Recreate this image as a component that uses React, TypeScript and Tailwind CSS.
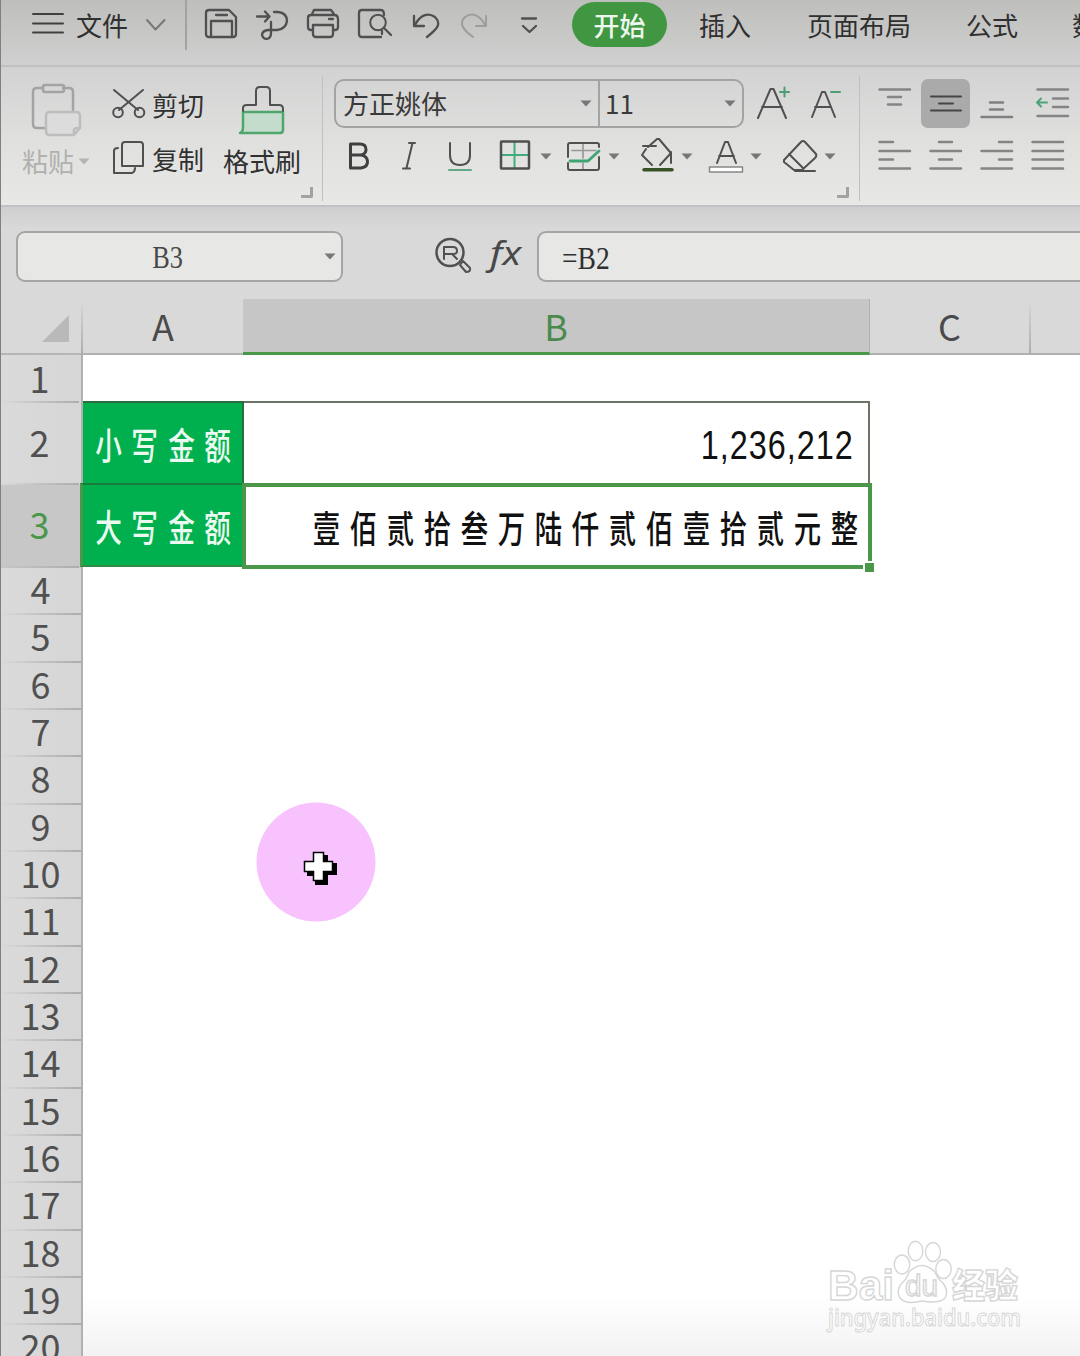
import React from "react";

type IconProps = {
  box: [number, number, number, number];
  children: React.ReactNode;
  className?: string;
};

/* Icon whose drawing area is given as x, y, width, height */
function Icon({ box, children, className = "" }: IconProps) {
  return (
    <svg
      className={"block shrink-0 " + className}
      width={box[2]}
      height={box[3]}
      viewBox={box.join(" ")}
      fill="none"
      stroke="#505050"
      strokeWidth={2}
      strokeLinecap="round"
      strokeLinejoin="round"
    >
      {children}
    </svg>
  );
}

function Caret({ className = "" }: { className?: string }) {
  return (
    <svg className={"block shrink-0 " + className} width="12" height="7" viewBox="0 0 12 7" fill="#777">
      <path d="M0.5 0.5H11.5L6 6.5Z" />
    </svg>
  );
}

function Corner({ className }: { className: string }) {
  return <span className={"absolute h-[11px] w-[12px] rounded-br-[2px] border-b-[3px] border-r-[3px] border-[#a2a2a2] " + className} />;
}

function TopBar() {
  return (
    <div className="flex h-[67px] shrink-0 items-start border-b-2 border-[#bfc0c3] bg-linear-to-b from-[#bebebc] to-[#d0d0d0] text-[26px] leading-[49px] text-[#303030]">
      <Icon box={[30, 10, 35, 28]} className="ml-[30px] mt-[10px]">
        <path d="M33 14H63M33 23.5H63M33 32.5H63" stroke="#404040" />
      </Icon>
      <span className="ml-[11px] w-[52px]">文件</span>
      <Icon box={[143, 14, 24, 22]} className="ml-[15px] mt-[14px]">
        <path d="M147 20L155.500 29.500L164.500 20" stroke="#777" />
      </Icon>
      <span className="ml-[18px] h-[50px] w-[2px] bg-[#a2a2a2]" />
      <Icon box={[203, 6, 36, 34]} className="ml-[16px] mt-[6px]">
        <path d="M209 10H229L236 17V34Q236 37 233 37H209Q206 37 206 34V13Q206 10 209 10ZM211 37V21H232V37M216 15H227" strokeWidth="2.300" />
      </Icon>
      <Icon box={[254, 6, 37, 36]} className="ml-[15px] mt-[6px]">
        <path d="M257 16.500H269M265 11.500L269.500 16.500L265 21.500M274 12H278Q287 13 287 21Q286 29 277 30H268Q262 31 262 35Q263 39 267 39Q271 38 271 33V22" strokeWidth="2.300" />
      </Icon>
      <Icon box={[305, 6, 36, 34]} className="ml-[14px] mt-[6px]">
        <path d="M313 30H311Q308 30 308 27V18Q308 15 311 15H334Q338 15 338 19V27Q338 30 335 30H333M312 14L314 10H331L334 14M329 19H333M313 25H333V34Q333 37 330 37H316Q313 37 313 34Z" strokeWidth="2.300" />
      </Icon>
      <Icon box={[356, 6, 37, 34]} className="ml-[15px] mt-[6px]">
        <path d="M381 37H362Q359 37 359 34V13Q359 10 362 10H381Q384 10 384 15M382 31V34M384 28L391 35" strokeWidth="2.300" />
        <circle cx="378" cy="22.500" r="7.800" />
      </Icon>
      <Icon box={[411, 10, 30, 31]} className="ml-[18px] mt-[10px]">
        <path d="M414 16V26H424M415 25C420 15 428 12 435 17C442 24 437 29 427 37" strokeWidth="2.300" />
      </Icon>
      <Icon box={[459, 10, 30, 31]} className="ml-[18px] mt-[10px]">
        <path d="M486 16V26H476M485 25C480 15 472 12 465 17C459 23 462 29 473 37" stroke="#9d9d9d" />
      </Icon>
      <Icon box={[519, 14, 20, 22]} className="ml-[30px] mt-[14px]">
        <path d="M522 18.500H536M523 26L529.500 32L536 26" strokeWidth="2.300" />
      </Icon>
      <span className="ml-[33px] mt-[2px] h-[45px] w-[95px] rounded-full bg-[#409641] text-center font-medium leading-[45px] text-[#eef7ee]">开始</span>
      <span className="ml-[32px] w-[52px]">插入</span>
      <span className="ml-[56px] w-[104px]">页面布局</span>
      <span className="ml-[55px] w-[52px]">公式</span>
      <span className="ml-[54px] w-[8px] overflow-hidden whitespace-nowrap">数据</span>
    </div>
  );
}

function ClipboardGroup() {
  return (
    <div className="relative flex w-[322px] shrink-0 text-[26px] leading-[30px] text-[#303030]">
      <div className="w-[92px] shrink-0 pl-[22px] pt-[15px]">
        <Icon box={[29, 82, 54, 56]} className="ml-[7px]">
          <g stroke="#a3a3a3" strokeWidth="2.500">
            <path d="M43 88H37Q33 88 33 92V124Q33 128 37 128H46M63 88H69Q73 88 73 92V110" />
            <rect x="43" y="85" width="21" height="7" rx="2" />
            <path d="M50 112H76Q80 112 80 116V128L74 135H50Q46 135 46 131V116Q46 112 50 112ZM74 134V130Q74 128 79 128" fill="#dcdcdc" stroke="#bdbdbd" />
          </g>
        </Icon>
        <div className="mt-[8px] flex items-center whitespace-nowrap text-[#b0b0ae]">
          粘贴
          <svg className="ml-[4px] block shrink-0" width="12" height="7" viewBox="0 0 12 7" fill="#b4b4b4">
            <path d="M0.500 0.500H11.500L6 6.500Z" />
          </svg>
        </div>
      </div>
      <div className="ml-[18px] w-[96px] shrink-0 pt-[21px]">
        <div className="flex items-start">
          <Icon box={[110, 88, 37, 32]}>
            <path d="M114 90L138 110M143 90L119 110" />
            <circle cx="118" cy="112.500" r="4.800" />
            <circle cx="139.500" cy="112.500" r="4.800" />
          </Icon>
          <span className="ml-[5px] mt-[2px] shrink-0 whitespace-nowrap">剪切</span>
        </div>
        <div className="mt-[19px] flex items-start">
          <Icon box={[110, 139, 37, 37]}>
            <path d="M125 142H140Q143 142 143 145V166H122V145Q122 142 125 142ZM118 148Q114 148 114 151V173H132Q135 172 135 168" />
          </Icon>
          <span className="ml-[5px] mt-[5px] shrink-0 whitespace-nowrap">复制</span>
        </div>
      </div>
      <div className="ml-[17px] w-[80px] shrink-0 pt-[16px]">
        <Icon box={[236, 83, 51, 54]} className="ml-[13px]">
          <path d="M243 112H283V130Q283 133 280 133H240Q243 132 243 127Z" fill="#c3dccb" stroke="#4fa66d" strokeWidth="2.500" />
          <path d="M243 111V108Q243 105 247 105H256V91Q256 87 260 87H266Q270 87 270 91V105H279Q283 105 283 109V111" />
        </Icon>
        <div className="mt-[9px] whitespace-nowrap">格式刷</div>
      </div>
      <Corner className="left-[301px] top-[120px]" />
    </div>
  );
}

function FontGroup() {
  return (
    <div className="relative w-[536px] shrink-0 pl-[11px] pt-[12px]">
      <div className="flex items-start">
        <div className="flex h-[49px] w-[410px] items-center rounded-[10px] border-2 border-[#a3a3a3] text-[26px] text-[#3a3a3a]">
          <span className="-mt-[2px] ml-[7px] w-[237px]">方正姚体</span>
          <Caret />
          <span className="ml-[6px] h-full w-[2px] bg-[#a3a3a3]" />
          <span className="-mt-[2px] ml-[5px] w-[119px]">11</span>
          <Caret />
        </div>
        <Icon box={[754, 84, 38, 40]} className="ml-[10px] mt-[5px]">
          <path d="M758 118L770.500 89H773.500L786 118M762 107H782" />
          <path d="M780 92H789M784.500 87.500V96.500" stroke="#4c9c75" />
        </Icon>
        <Icon box={[808, 84, 36, 40]} className="ml-[16px] mt-[5px]">
          <path d="M812 117L822 92H825L835 117M815 107H831" />
          <path d="M831 92H840" stroke="#4c9c75" />
        </Icon>
      </div>
      <div className="mt-[10px] flex h-[40px] items-start">
        <Icon box={[346, 138, 26, 36]} className="ml-[12px]">
          <path d="M350.500 144V168H361Q368 167 367.500 161Q367 156 361 155H351M361 155Q366 154 366 149.500Q366 144 360 144H350.500" strokeWidth="3" stroke="#404040" />
        </Icon>
        <Icon box={[398, 138, 22, 36]} className="ml-[26px]">
          <path d="M409 143H415M403 168.500H410M412.500 143L406.500 168" />
        </Icon>
        <Icon box={[446, 138, 28, 36]} className="ml-[26px]">
          <path d="M450 143V155Q450 165 460 165Q470 165 470 155V143" />
          <path d="M449 170H471" stroke="#62aa87" />
        </Icon>
        <Icon box={[498, 138, 33, 36]} className="ml-[24px]">
          <path d="M514.500 142V168M502 155H528" stroke="#3fae7c" />
          <rect x="501" y="141.500" width="28" height="27" rx="0.500" strokeWidth="2.500" />
        </Icon>
        <Caret className="ml-[9px] mt-[15px]" />
        <Icon box={[566, 138, 37, 36]} className="ml-[13px]">
          <path d="M573 150.500H597M584 143V158M584 163V170" stroke="#999" strokeWidth="1.700" />
          <path d="M600 147V145Q600 143 598 143H571Q569 143 569 145V157M569 163V168Q569 170 571 170H598Q600 170 600 168V157" />
          <path d="M571 161H589L600 151" stroke="#3fa575" strokeWidth="2.800" />
        </Icon>
        <Caret className="ml-[6px] mt-[15px]" />
        <Icon box={[639, 136, 36, 38]} className="ml-[19px] -mt-[2px]">
          <path d="M643 146H656M648 147L657 139H659L670 152M646 149L642 155L652 165M671 152V163M671 153L660 165" />
          <path d="M644 169.700H672" stroke="#375326" strokeWidth="3.500" />
        </Icon>
        <Caret className="ml-[6px] mt-[15px]" />
        <Icon box={[706, 138, 40, 38]} className="ml-[13px]">
          <path d="M717 163L725 142H728L736 163M719 156H734" />
          <rect x="709.500" y="167" width="33" height="5" fill="#fff" stroke="#888" strokeWidth="1.500" />
        </Icon>
        <Caret className="ml-[4px] mt-[15px]" />
        <Icon box={[780, 137, 40, 38]} className="ml-[18px] -mt-[1px]">
          <path d="M784 160L801 142Q803 140 805 142L816 154Q817 156 815 158L802 170H794L784 162ZM789 154L803 168M795 171H815" />
        </Icon>
        <Caret className="ml-[4px] mt-[15px]" />
      </div>
      <Corner className="left-[514px] top-[120px]" />
    </div>
  );
}

function ParagraphGroup() {
  return (
    <div className="pl-[17px] pt-[12px]">
      <div className="flex w-[220px] items-start">
        <Icon box={[877, 79, 36, 48]}>
          <path d="M879.500 89.500H910M888 97H901M888 104.500H901" stroke="#858585" strokeWidth="2.500" />
        </Icon>
        <span className="ml-[8px] flex h-[49px] w-[49px] items-center justify-center rounded-[7px] bg-[#aaa]">
          <Icon box={[928, 79, 36, 48]}>
            <path d="M931 95.500H961M939 102.500H953M931 109.500H961" stroke="#454545" />
          </Icon>
        </span>
        <Icon box={[979, 79, 36, 48]} className="ml-[9px]">
          <path d="M990 102.500H1003M990 109.500H1003M981.500 117H1012" stroke="#808080" strokeWidth="2.500" />
        </Icon>
        <Icon box={[1033, 79, 37, 48]} className="ml-[18px]">
          <path d="M1037.500 89.500H1068M1053 98.500H1068M1053 107H1068M1037.500 116H1068" stroke="#858585" strokeWidth="2.500" />
          <path d="M1037 102.500H1047M1041 98.500L1037 102.500L1041 106.500" stroke="#4ba377" />
        </Icon>
      </div>
      <div className="mt-[9px] flex w-[220px] gap-[15px]">
        <Icon box={[877, 137, 36, 36]}>
          <path d="M879.500 142H893M879.500 151H910M879.500 159.500H893M879.500 168.500H910" stroke="#858585" strokeWidth="2.500" />
        </Icon>
        <Icon box={[928, 137, 36, 36]}>
          <path d="M939 142H952M930.500 151H961M939 159.500H952M930.500 168.500H961" stroke="#858585" strokeWidth="2.500" />
        </Icon>
        <Icon box={[979, 137, 36, 36]}>
          <path d="M999 142H1012M981.500 151H1012M999 159.500H1012M981.500 168.500H1012" stroke="#858585" strokeWidth="2.500" />
        </Icon>
        <Icon box={[1030, 137, 36, 36]}>
          <path d="M1032.500 142H1063M1032.500 151H1063M1032.500 159.500H1063M1032.500 168.500H1063" stroke="#858585" strokeWidth="2.500" />
        </Icon>
      </div>
    </div>
  );
}

function FormulaBar() {
  return (
    <div className="flex h-[92px] shrink-0 items-start bg-linear-to-b from-[#cfcfcf] via-[#d9d9d9] via-25% to-[#d9d9d9] pt-[24px]">
      <div className="ml-[16px] flex h-[51px] w-[327px] items-center rounded-[9px] border-2 border-[#a5a5a5] bg-[#e7e7e5]">
        <span className="ml-[123px] w-[54px] text-center font-['Liberation_Serif',serif] text-[32px] text-[#484848]">
          <span className="inline-block scale-x-[0.82]">B3</span>
        </span>
        <Caret className="ml-[129px]" />
      </div>
      <Icon box={[432, 234, 42, 42]} className="ml-[89px] mt-[3px]">
        <circle cx="450" cy="252.500" r="13.500" strokeWidth="2.500" />
        <path d="M444 259V247H453Q457 247 457 251Q457 254 453 254H444M453 255L457 259" />
        <path d="M460 265L463 261L470 268Q471 272 466 272Z" />
      </Icon>
      <span className="ml-[16px] w-[34px] font-['Noto_Sans',sans-serif] text-[33px] italic leading-[44px] text-[#484848]">
        <span className="inline-block origin-left scale-x-[1.18]">fx</span>
      </span>
      <div className="ml-[13px] flex h-[51px] flex-1 items-center rounded-l-[9px] border-y-2 border-l-2 border-[#a5a5a5] bg-[#e7e7e5]">
        <span className="ml-[23px] mt-[3px] inline-block origin-left scale-x-[0.86] font-['Liberation_Serif',serif] text-[32px] text-[#303030]">=B2</span>
      </div>
    </div>
  );
}

function ColumnHeaders() {
  return (
    <div className="flex h-[56px] shrink-0 bg-[#d9d9d9] text-[36px] leading-[52px] text-[#4a4a4a]">
      <div className="flex w-[81px] items-end justify-end border-b-2 border-[#b5b5b5] pb-[11px] pr-[12px]">
        <svg width="27" height="27" viewBox="0 0 27 27" fill="#b9b9b9" className="block">
          <path d="M27 0V27H0Z" />
        </svg>
      </div>
      <div className="w-[2px] bg-linear-to-b from-[#d9d9d9] to-[#acacac]" />
      <div className="w-[160px] border-b-2 border-[#b0b0b0] text-center">A</div>
      <div className="w-[627px] border-b-[3px] border-r border-b-[#4a974a] border-r-[#b0b0b0] bg-[#c6c6c6] text-center text-[#4a8a4c]">B</div>
      <div className="w-[159px] border-b-2 border-[#b0b0b0] text-center">C</div>
      <div className="w-[2px] bg-linear-to-b from-[#d9d9d9] to-[#acacac]" />
      <div className="flex-1 border-b-2 border-[#b0b0b0]" />
    </div>
  );
}

function RowHeader({ n, className }: { n: number; className: string }) {
  return (
    <div className={"flex shrink-0 flex-col " + className}>
      <span className="flex-1">{n}</span>
      <span className="h-[2px] shrink-0 bg-linear-to-r from-transparent to-[#adadad]" />
    </div>
  );
}

function CellLabel({ text }: { text: string }) {
  return (
    <div className="flex pl-[7px] text-[37px] leading-[82px] text-[#eafaf0]">
      {text.split("").map((c, i) => (
        <span key={i} className="w-[36.500px] shrink-0 text-center">
          <span className="-mx-[2px] inline-block scale-x-[0.72] font-medium">{c}</span>
        </span>
      ))}
    </div>
  );
}

const rest = Array.from({ length: 17 }, (_, i) => i + 4);
const amount = "壹佰贰拾叁万陆仟贰佰壹拾贰元整";

function Sheet() {
  return (
    <div className="relative flex h-[1001px] shrink-0 bg-white">
      <div className="w-[83px] shrink-0 overflow-hidden border-r-2 border-[#b0b0b0] bg-linear-to-r from-[#dadada] to-[#d6d6d6] text-center text-[36px] text-[#505050]">
        <RowHeader n={1} className="h-[48px] pr-[2px] leading-[44px]" />
        <RowHeader n={2} className="h-[82px] pr-[2px] leading-[77px]" />
        <RowHeader n={3} className="h-[83px] bg-[#c7c7c7] pr-[2px] leading-[77px] text-[#4a974a]" />
        {rest.map((n) => (
          <RowHeader key={n} n={n} className="h-[47.330px] leading-[41px]" />
        ))}
      </div>
      <div className="w-[787px] shrink-0 pt-[46px]">
        <div className="flex h-[82px]">
          <div className="w-[161px] border-r-2 border-t-2 border-[#2c6d3e] bg-[#00b04e]">
            <CellLabel text="小写金额" />
          </div>
          <div className="flex flex-1 items-center justify-end border-r-2 border-t-2 border-[#6c7565] pr-[14px]">
            <span className="mt-[3px] inline-block origin-right scale-x-[0.81] font-['Liberation_Sans',sans-serif] text-[40px] leading-[78px] tracking-[1.2px] text-[#111]">1,236,212</span>
          </div>
        </div>
        <div className="flex items-start">
          <div className="-ml-[3px] h-[84px] w-[164px] border-b-2 border-l-[3px] border-t-2 border-b-[#2f8c45] border-l-[#4a974a] border-t-[#187d3a] bg-[#00b04e]">
            <CellLabel text="大写金额" />
          </div>
          <div className="relative -mr-[2px] -ml-[2px] flex h-[86px] flex-1 justify-end border-4 border-[#4a974a] bg-white pr-[5px] text-[37px] leading-[80px] text-[#111]">
            {amount.split("").map((c, i) => (
              <span key={i} className="w-[37px] shrink-0 text-center">
                <span className="inline-block scale-x-[0.74] font-medium">{c}</span>
              </span>
            ))}
            <span className="absolute -bottom-[9px] -right-[8px] h-[13px] w-[13px] border-2 border-white bg-[#4a974a]" />
          </div>
        </div>
      </div>

      <svg className="absolute left-[256px] top-[447px]" width="120" height="120" viewBox="256 802 120 120">
        <circle cx="316" cy="862" r="59.500" fill="#f8c2fe" />
        <path d="M316 855H328V863H337V875H328V885H315V876H307V865H316Z" fill="#000" />
        <path d="M313.500 852.500H323.500V861.500H332.500V871.500H323.500V880.500H313.500V871.500H304.500V861.500H313.500Z" fill="#fff" stroke="#000" strokeWidth="1.500" />
      </svg>

      <div className="absolute bottom-0 left-[83px] right-0 h-[60px] bg-linear-to-b from-transparent to-black/5" />
      <svg className="absolute left-[820px] top-[880px]" width="220" height="105" viewBox="820 1235 220 105" fill="#fff" stroke="#d6d6d6" strokeWidth="1.400">
        <text x="828" y="1300" fontFamily="Liberation Sans, sans-serif" fontWeight="bold" fontSize="43" textLength="66" lengthAdjust="spacingAndGlyphs">Bai</text>
        <ellipse cx="902" cy="1264.500" rx="7.700" ry="9.500" />
        <ellipse cx="915.500" cy="1251" rx="7.300" ry="9.800" />
        <ellipse cx="933" cy="1252" rx="7.500" ry="9.500" />
        <ellipse cx="943.500" cy="1269" rx="7.700" ry="9.500" />
        <path d="M909 1272Q922 1259 935 1272Q937 1278 943 1283Q949 1291 945 1298Q939 1304 922 1301Q906 1305 900 1298Q896 1291 901 1284Q907 1279 909 1272Z" />
        <text x="905" y="1296" fontFamily="Liberation Sans, sans-serif" fontSize="29" textLength="33" lengthAdjust="spacingAndGlyphs">du</text>
        <text x="952" y="1298" fontFamily="Noto Sans CJK SC, sans-serif" fontWeight="900" fontSize="34" textLength="66" lengthAdjust="spacingAndGlyphs">经验</text>
        <text x="828" y="1326" fontFamily="Noto Sans, sans-serif" fontSize="24" fontWeight="500" strokeWidth="1" textLength="193" lengthAdjust="spacingAndGlyphs">jingyan.baidu.com</text>
      </svg>
    </div>
  );
}

export default function App() {
  return (
    <div className="relative flex h-[1356px] w-[1080px] flex-col overflow-hidden bg-white font-['Noto_Sans_CJK_SC',sans-serif]">
      <TopBar />
      <div className="flex h-[140px] shrink-0 overflow-hidden border-b-2 border-[#c2c2c4] bg-linear-to-b from-[#d2d2d2] via-[#dfdfde] to-[#e8e8e6]">
        <ClipboardGroup />
        <span className="mt-[9px] h-[125px] w-px shrink-0 bg-[#c0c0c0]" />
        <FontGroup />
        <span className="mt-[9px] h-[125px] w-px shrink-0 bg-[#c0c0c0]" />
        <ParagraphGroup />
      </div>
      <FormulaBar />
      <ColumnHeaders />
      <Sheet />
      <div className="absolute inset-y-0 left-0 w-px bg-[#808080]" />
    </div>
  );
}
